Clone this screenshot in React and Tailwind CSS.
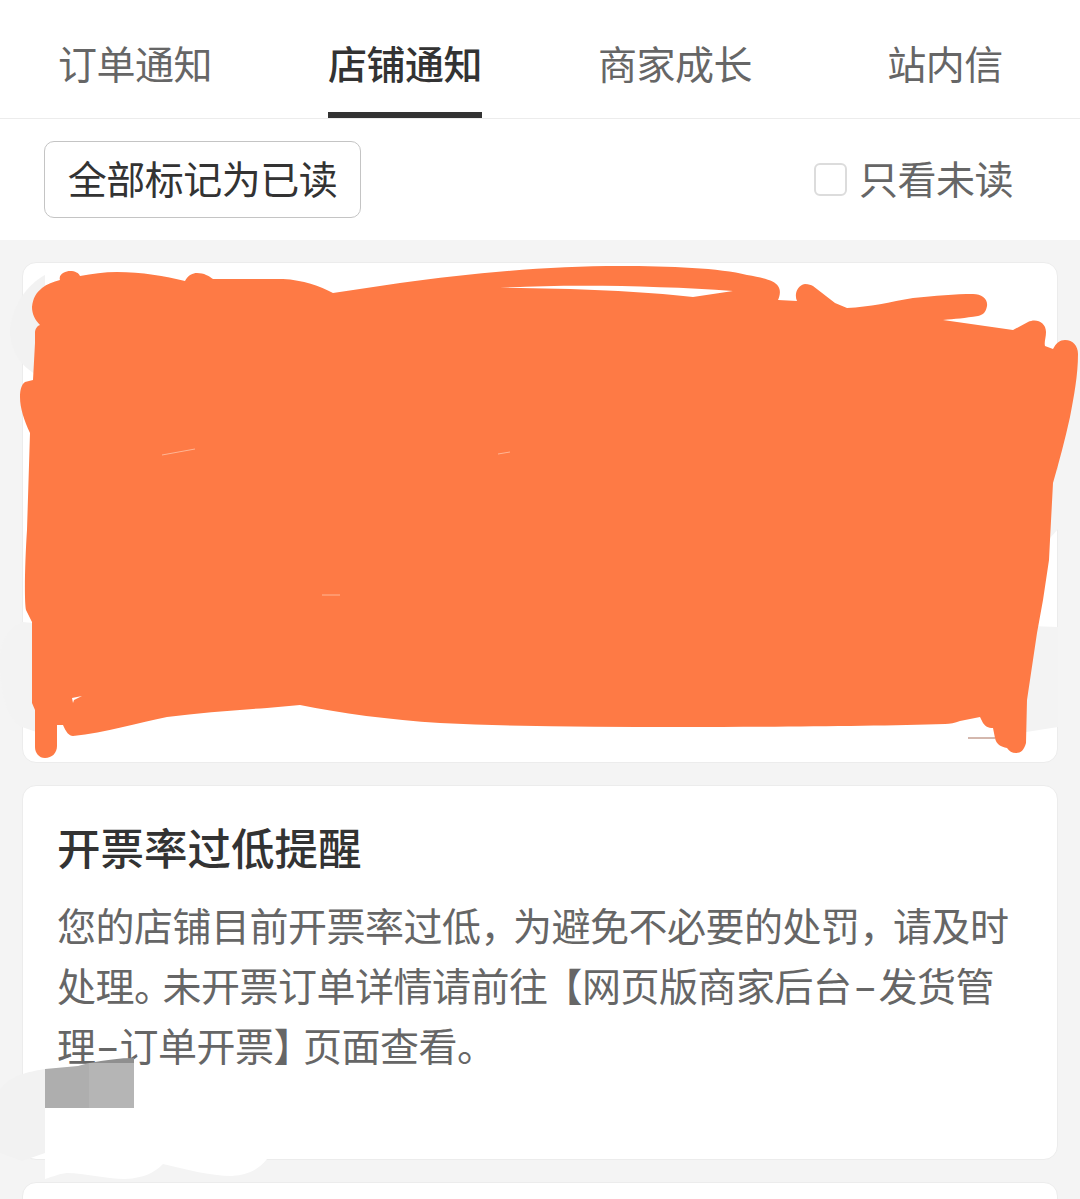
import React from 'react'

const tabs = ['订单通知', '店铺通知', '商家成长', '站内信']

// hand-drawn redaction marks that sit on top of the page
const Scribble = () => {
  return (
    <svg className="absolute inset-0 w-[1080px] h-[1199px] pointer-events-none" viewBox="0 0 1080 1199">
      {/* grey smudges */}
      <path fill="#f2f2f2" d="M45 275 C28 284 12 305 10 330 C10 350 20 365 35 374 L45 374 Z" />
      <path fill="#f3f3f3" d="M22 622 L45 624 L45 735 L22 727 C10 720 0 700 0 660 C0 640 10 628 22 622 Z" />
      <path fill="#f3f3f3" d="M1030 626 L1058 627 L1058 727 L1020 733 Z" />
      <path fill="#f4f4f4" d="M1040 470 L1059 470 L1059 528 L1050 538 L1040 538 Z" />
      <path fill="#f2f2f2" d="M0 1090 C8 1078 20 1073 45 1069 L45 1153 L22 1161 L0 1153 Z" />

      {/* white cover over the bottom of the second card */}
      <path fill="#ffffff" d="M45 1075 L270 1075 L267 1159 C258 1170 248 1175 232 1176 C210 1176 185 1169 163 1164 C155 1172 145 1178 125 1179 C105 1179 85 1173 67 1173 C58 1174 52 1177 45 1179 Z" />

      {/* grey blocks */}
      <path fill="#aeaeae" d="M45 1069 L78 1066 L89 1063 L89 1108 L45 1108 Z" />
      <path fill="#b5b5b5" d="M89 1063 L134 1063 L134 1108 L89 1108 Z" />
      <path fill="#8f8f8f" d="M89 1063 C105 1060 120 1058 134 1058 L134 1063 Z" />

      {/* orange scribble */}
      <path
        fill="#fe7a45"
        d="M32 307 C33 298 36 293 42 288 C47 284 53 282 60 280 C58 274 66 271 70 271 C75 271 79 273 80 276 C92 274 104 272 117 272 C142 272 165 276 185 281 C188 275 193 273 197 273 C204 273 209 276 213 279 L283 279 C303 280 320 286 333 293 L400 283 C470 273 550 266 620 266 C670 266 720 268 747 275 C765 278 775 281 778 286 C781 290 780 296 778 300 L797 301 C794 295 797 285 805 284 C809 284 811 285 813 286 L835 303 L847 308 C870 307 890 302 913 298 C935 296 955 294 973 294 C982 294 988 299 987 306 C986 312 983 315 978 316 C965 318 955 319 943 320 L1013 330 L1028 322 C1036 318 1046 322 1046 332 C1046 338 1044 342 1045 346 L1053 349 C1056 343 1060 340 1065 340 C1073 340 1078 346 1078 354 C1078 375 1074 396 1070 417 C1065 440 1059 462 1053 483 L1050 540 L1049 560 L1043 600 L1037 633 L1027 700 L1026 743 C1024 750 1021 753 1016 753 C1012 753 1009 751 1007 748 C1001 747 996 744 995 738 L993 728 C988 728 985 726 983 723 L980 717 L960 721 C955 723 950 724 945 724 C880 726 780 727 680 727 C600 727 520 727 440 723 C390 720 340 713 300 705 L267 708 C233 710 200 713 167 717 C140 722 105 733 73 736 C69 736 66 732 63 725 L57 725 L57 746 C57 753 52 758 45 758 C39 758 35 753 35 747 L35 710 L32 703 L32 622 L26 610 C24 600 25 560 27 530 L30 433 C24 420 20 408 20 397 C20 389 22 384 25 382 L33 380 L35 343 L35 333 C35 329 37 326 40 325 C35 320 32 314 32 307 Z"
      />

      {/* gaps left in the scribble */}
      <path fill="#ffffff" d="M500 288 C570 284 660 286 733 291 L693 297 C640 291 570 288 500 288 Z" />
      <path fill="#ffffff" d="M72 698 L82 696 L74 700 L73 703 Z" />
      <path fill="none" stroke="#ffb594" strokeWidth="1" d="M162 455 L195 449 M322 595 L340 595 M498 454 L510 452" />
      <path fill="none" stroke="#a8715c" strokeWidth="1" d="M968 738 L995 738" />
    </svg>
  )
}

const App = () => {
  return (
    <div className="relative w-[1080px] h-[1199px] overflow-hidden bg-[#f4f4f4] font-['Noto_Sans_CJK_SC',sans-serif]">
      <nav className="grid grid-cols-4 h-[119px] bg-white border-b border-[#ececec]">
        {tabs.map((tab, i) => (
          <div key={tab} className="flex justify-center">
            <span
              className={
                i === 1
                  ? 'flex items-center h-[118px] pt-[12px] border-b-[6px] border-[#333333] text-[39px] tracking-[-0.5px] font-medium text-[#333333]'
                  : 'flex items-center h-[118px] pt-[12px] border-b-[6px] border-transparent text-[39px] tracking-[-0.5px] text-[#666666]'
              }
            >
              {tab}
            </span>
          </div>
        ))}
      </nav>

      <div className="flex items-center justify-between h-[121px] pl-[44px] pr-[67px] bg-white">
        <button className="flex items-center justify-center w-[317px] h-[77px] pb-[4px] bg-white border border-[#c4c4c4] rounded-[10px] text-[39px] tracking-[-0.5px] text-[#333333]">
          全部标记为已读
        </button>
        <label className="flex items-center gap-[12px] text-[39px] tracking-[-0.5px] text-[#666666]">
          <span className="w-[33px] h-[33px] border-2 border-[#dcdcdc] rounded-[6px]"></span>
          <span className="pb-[4px]">只看未读</span>
        </label>
      </div>

      <main className="flex flex-col gap-[22px] px-[22px] pt-[22px]">
        <section className="h-[501px] shrink-0 bg-white border border-[#ececec] rounded-[14px]"></section>

        <section className="h-[375px] shrink-0 px-[34px] pt-[31px] bg-white border border-[#ececec] rounded-[14px]">
          <h2 className="text-[43.5px] leading-[60px] font-medium text-[#333333]">开票率过低提醒</h2>
          <p className="mt-[17px] text-[39px] tracking-[-0.5px] leading-[60px] text-[#666666]">
            您的店铺目前开票率过低<span className="-mr-[6px]">{'\uFF0C'}</span>为避免不必要的处罚<span className="-mr-[5px]">{'\uFF0C'}</span>请及时处理<span className="-mr-[10px]">。</span>未开票订单详情请前往<span className="-ml-[4px]">【</span>网页版商家后台<span className="inline-block w-[27px] text-center font-medium">–</span>发货管理<span className="inline-block w-[24px] text-center font-medium">–</span>订单开票<span className="-mr-[9px]">】</span>页面查看。
          </p>
        </section>

        <section className="h-[100px] shrink-0 bg-white border border-[#ececec] rounded-[14px]"></section>
      </main>

      <Scribble />
    </div>
  )
}

export default App
